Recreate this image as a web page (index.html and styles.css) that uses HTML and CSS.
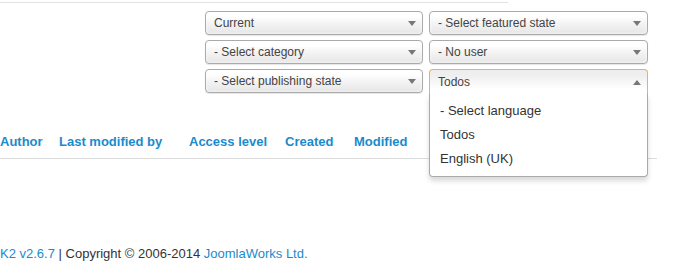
FILE: index.html
```html
<!DOCTYPE html>
<html>
<head>
    <title>K2 Items</title>
    <link rel="stylesheet" href="styles.css">
</head>
<body>
    <div class="topline"></div>

    <!-- filters -->
    <div class="filters">
        <div class="sel"><span>Current</span><i class="arrow"></i></div>
        <div class="sel"><span>- Select featured state</span><i class="arrow"></i></div>
        <div class="sel"><span>- Select category</span><i class="arrow"></i></div>
        <div class="sel"><span>- No user</span><i class="arrow"></i></div>
        <div class="sel"><span>- Select publishing state</span><i class="arrow"></i></div>
        <div class="chosen">
            <div class="sel open"><span>Todos</span><i class="arrow up"></i></div>
            <ul class="drop">
                <li>- Select language</li>
                <li>Todos</li>
                <li>English (UK)</li>
            </ul>
        </div>
    </div>

    <!-- table head -->
    <div class="thead">
        <a class="th c1">Author</a>
        <a class="th c2">Last modified by</a>
        <a class="th c3">Access level</a>
        <a class="th c4">Created</a>
        <a class="th c5">Modified</a>
    </div>

    <div class="footer">
        <a>K2 v2.6.7</a> | Copyright &copy; 2006-2014 <a>JoomlaWorks Ltd.</a>
    </div>
</body>
</html>
```

FILE: styles.css
```css
body {
    margin: 0;
    font-family: "Liberation Sans", Arial, sans-serif;
    font-size: 12px;
    color: #333;
    background: #fff;
}

a {
    color: #1a8bcc;
    text-decoration: none;
}

.topline {
    width: 508px;
    margin-top: 2px;
    border-top: 1px solid #e3e3e3;
}

.filters {
    display: grid;
    grid-template-columns: 218px 219px;
    column-gap: 6px;
    row-gap: 5px;
    margin: 8px 0 0 205px;
}

.sel {
    display: flex;
    align-items: center;
    justify-content: space-between;
    height: 22px;
    padding: 0 6px 0 8px;
    border: 1px solid #aaa;
    border-radius: 4px;
    background: linear-gradient(#fff 20%, #f4f4f4 50%, #e6e6e6 100%);
    box-shadow: 0 0 3px #fff inset, 0 1px 1px rgba(0,0,0,0.1);
    color: #444;
}

.arrow {
    width: 0;
    height: 0;
    border-left: 4px solid transparent;
    border-right: 4px solid transparent;
    border-top: 5px solid #777;
}

.arrow.up {
    border-top: 0;
    border-bottom: 5px solid #777;
}

.chosen {
    position: relative;
}

.sel.open {
    border-color: #e8b452;
    border-bottom-color: transparent;
    border-radius: 4px 4px 0 0;
    height: 24px;
    background: linear-gradient(#eee 20%, #fff 80%);
    box-shadow: none;
}

.drop {
    position: absolute;
    left: 0;
    right: 0;
    top: 25px;
    margin: 0;
    padding: 5px 0 5px 0;
    list-style: none;
    background: #fff;
    border: 1px solid #aaa;
    border-top: 0;
    border-radius: 0 0 4px 4px;
    box-shadow: 0 4px 5px rgba(0,0,0,0.15);
    z-index: 2;
}

.drop li {
    height: 24px;
    line-height: 24px;
    padding: 0 10px;
    color: #333;
    font-size: 13px;
}

.thead {
    display: grid;
    grid-template-columns: 59px 130px 96px 69px auto;
    width: 657px;
    margin-top: 39px;
    padding-bottom: 8px;
    border-bottom: 1px solid #ddd;
}

.th {
    font-size: 13px;
    font-weight: bold;
    line-height: 16px;
}

.footer {
    margin-top: 87px;
    font-size: 13px;
    line-height: 16px;
}
```
